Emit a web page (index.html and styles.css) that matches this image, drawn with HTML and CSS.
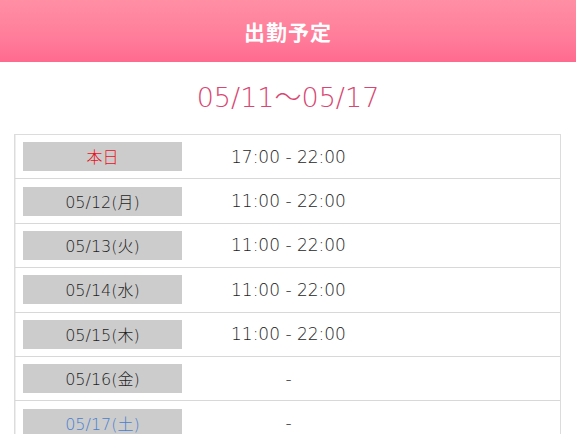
FILE: index.html
```html
<!DOCTYPE html>
<html lang="ja">
<head>
<meta charset="utf-8">
<link rel="stylesheet" href="styles.css">
</head>
<body>
<header class="bar"><h1 class="bar-title">出勤予定</h1></header>
<h2 class="range">05/11～05/17</h2>
<div class="sched">
  <div class="row"><div class="day day-today">本日</div><div class="time">17:00 - 22:00</div></div>
  <div class="row"><div class="day">05/12(月)</div><div class="time">11:00 - 22:00</div></div>
  <div class="row"><div class="day">05/13(火)</div><div class="time">11:00 - 22:00</div></div>
  <div class="row"><div class="day">05/14(水)</div><div class="time">11:00 - 22:00</div></div>
  <div class="row"><div class="day">05/15(木)</div><div class="time">11:00 - 22:00</div></div>
  <div class="row"><div class="day">05/16(金)</div><div class="time time-off">-</div></div>
  <div class="row"><div class="day day-sat">05/17(土)</div><div class="time time-off">-</div></div>
</div>
</body>
</html>
```
FILE: styles.css
```css
html, body { margin: 0; padding: 0; background: #fff; }
body {
  font-family: "DejaVu Sans", "Noto Sans CJK JP", sans-serif;
  font-weight: 300;
  color: #222;
  overflow: hidden;
}
.bar {
  height: 62px;
  background: linear-gradient(to bottom, #ff8fa4 0%, #ff7d9a 60%, #ff6a8f 100%);
  display: flex;
  align-items: center;
  justify-content: center;
}
.bar-title {
  margin: 0;
  font-family: "Noto Sans CJK JP", sans-serif;
  color: #fff;
  font-size: 21px;
  font-weight: 700;
  letter-spacing: 1px;
  line-height: 1;
}
.range {
  margin: 0;
  padding-top: 20px;
  height: 53px;
  box-sizing: border-box;
  text-align: center;
  font-weight: 300;
  font-size: 27px;
  line-height: 1.2;
  color: #d94672;
}
.sched {
  margin: 19px 15px 0 14px;
  border: 1px solid #dcdcdc;
  border-bottom: none;
  box-shadow: inset 1px 0 0 #eee;
}
.row {
  display: flex;
  align-items: center;
  height: 43.4px;
  padding-left: 8px;
  border-bottom: 1px solid #d8d8d8;
}
.day {
  width: 159px;
  height: 29px;
  background: #cccccc;
  display: flex;
  align-items: center;
  justify-content: center;
  font-size: 16px;
  color: #1e1e1e;
  padding-bottom: 1px;
  box-sizing: border-box;
}
.day-today { color: #e8111c; }
.day-sat { color: #4a80d0; }
.time {
  margin-left: 49px;
  font-size: 17px;
  color: #1e1e1e;
}
.time-off {
  width: 115px;
  text-align: center;
}
```
